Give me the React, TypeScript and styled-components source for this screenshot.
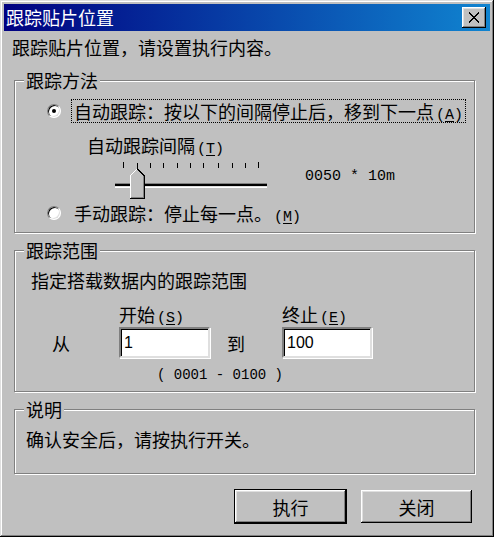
import React from 'react';
import styled, { createGlobalStyle } from 'styled-components';

const GlobalStyle = createGlobalStyle`
  html, body {
    margin: 0;
    padding: 0;
    background: #c0c0c0;
  }
  body {
    font-family: "Noto Sans CJK SC", "Liberation Sans", sans-serif;
  }
`;

const bevelOut = `inset -1px -1px #000, inset 1px 1px #fff, inset -2px -2px #808080, inset 2px 2px #dfdfdf`;

const Window = styled.div`
  box-sizing: border-box;
  width: 494px;
  height: 537px;
  padding: 4px;
  background: #c0c0c0;
  box-shadow: inset -1px -1px #000, inset 1px 1px #dfdfdf, inset -2px -2px #808080, inset 2px 2px #fff;
  display: flex;
  flex-direction: column;
  color: #000;
  font-size: 18px;
`;

const TitleBar = styled.div`
  height: 27px;
  flex-shrink: 0;
  display: flex;
  align-items: flex-start;
  padding: 0 4px 0 2px;
  background: linear-gradient(to right, #000080, #1084d0);
`;

const Title = styled.span`
  flex: 1;
  color: #fff;
  line-height: 27px;
`;

const CloseButton = styled.button`
  width: 24px;
  height: 21px;
  margin-top: 3px;
  padding: 0;
  border: none;
  background: #c0c0c0;
  box-shadow: ${bevelOut};
  display: flex;
  align-items: center;
  justify-content: center;
`;

const Body = styled.div`
  display: flex;
  flex-direction: column;
  padding: 0 15px 0 8px;
`;

const Intro = styled.div`
  margin-top: 5px;
  height: 22px;
  line-height: 22px;
`;

const Group = styled.fieldset<{ $gap: number; $pad: number }>`
  margin: ${p => p.$gap}px 0 0 2px;
  padding: 0 0 ${p => p.$pad}px 0;
  min-width: 0;
  border: 1px solid #808080;
  box-shadow: 1px 1px 0 #fff, inset 1px 1px 0 #fff;
`;

const Legend = styled.legend`
  margin-left: 9px;
  padding: 0 2px;
  height: 20px;
  line-height: 20px;
  background: #c0c0c0;
`;

const Key = styled.span`
  font-family: "Liberation Mono", monospace;
  font-size: 15px;
  line-height: 1;
  margin-left: 2px;
  & u {
    text-underline-offset: 2px;
  }
`;

const OptionRow = styled.div<{ $gap: number }>`
  display: flex;
  align-items: center;
  height: 24px;
  margin: ${p => p.$gap}px 0 0 32px;
`;

const Radio = styled.span<{ $checked?: boolean }>`
  box-sizing: border-box;
  position: relative;
  width: 14px;
  height: 14px;
  margin-top: -1px;
  border-radius: 50%;
  background: #fff;
  border: 1px solid;
  border-color: #808080 #fff #fff #808080;
  box-shadow: inset 1px 1px #000, inset -1px -1px #dfdfdf;
  &::after {
    content: "";
    display: ${p => (p.$checked ? 'block' : 'none')};
    position: absolute;
    left: 4px;
    top: 4px;
    width: 4px;
    height: 4px;
    border-radius: 50%;
    background: #000;
  }
`;

const OptionText = styled.span<{ $focus?: boolean }>`
  margin-left: 10px;
  padding: 0 2px;
  height: 22px;
  line-height: 22px;
  border: 1px dotted ${p => (p.$focus ? '#000' : 'transparent')};
`;

const IntervalLabel = styled.div`
  margin: 12px 0 0 72px;
  height: 20px;
  line-height: 20px;
`;

const SliderRow = styled.div`
  display: flex;
  align-items: flex-start;
  height: 40px;
  margin: 5px 0 0 97px;
`;

const SliderValue = styled.span`
  margin: 7px 0 0 33px;
  font-family: "Liberation Mono", monospace;
  font-size: 15px;
  line-height: 20px;
`;

const Description = styled.div`
  margin: 9px 0 0 16px;
  height: 22px;
  line-height: 22px;
`;

const RangeGrid = styled.div`
  display: grid;
  grid-template-columns: 67px 91px 72px 90px;
  grid-template-rows: 20px 31px;
  row-gap: 3px;
  margin: 13px 0 0 37px;
  line-height: 20px;
`;

const RangeWord = styled.span<{ $indent?: number }>`
  align-self: center;
  padding-left: ${p => p.$indent ?? 0}px;
`;

const TextInput = styled.input`
  box-sizing: border-box;
  width: 100%;
  height: 31px;
  margin: 0;
  padding: 0 0 0 3px;
  border: 2px solid;
  border-color: #808080 #dfdfdf #dfdfdf #808080;
  box-shadow: inset 1px 1px #000, 1px 1px 0 #fff;
  background: #fff;
  font-family: "Liberation Sans", sans-serif;
  font-size: 16px;
  color: #000;
  outline: none;
`;

const RangeHint = styled.div`
  margin: 7px 0 0 142px;
  height: 20px;
  font-family: "Liberation Mono", monospace;
  font-size: 14px;
  line-height: 20px;
  white-space: pre;
`;

const Note = styled.div`
  margin: 9px 0 0 11px;
  height: 22px;
  line-height: 22px;
`;

const ButtonRow = styled.div`
  display: flex;
  justify-content: flex-end;
  gap: 13px;
  margin: 15px 2px 0 0;
`;

const Button = styled.button<{ $default?: boolean }>`
  box-sizing: border-box;
  width: 113px;
  height: 35px;
  padding: 0;
  background: #c0c0c0;
  border: 1px solid ${p => (p.$default ? '#000' : 'transparent')};
  box-shadow: ${bevelOut};
  font-family: "Noto Sans CJK SC", sans-serif;
  font-size: 18px;
  color: #000;
`;

const Slider = () => {
  const ticks = [11, 25, 38, 51, 65, 78, 91, 106, 120, 133, 146];
  return (
    <svg width="160" height="40" viewBox="0 0 160 40" shapeRendering="crispEdges">
      {ticks.map((x, i) => (
        <rect
          key={x}
          x={x}
          y={i === 0 || i === ticks.length - 1 ? 2 : 3}
          width="1"
          height={i === 0 || i === ticks.length - 1 ? 6 : 5}
          fill="#000"
        />
      ))}
      <rect x="3" y="23" width="152" height="1" fill="#808080" />
      <rect x="3" y="24" width="152" height="2" fill="#000" />
      <rect x="3" y="26" width="152" height="1" fill="#dfdfdf" />
      <rect x="3" y="27" width="152" height="1" fill="#fff" />
      <polygon points="18,15 25,8 32,15 32,38 18,38" fill="#c0c0c0" />
      <polyline points="18.5,38 18.5,15.5 25,9" fill="none" stroke="#fff" strokeWidth="1" />
      <polyline points="25,8.5 32.5,16 32.5,38.5 18,38.5" fill="none" stroke="#000" strokeWidth="1" />
      <polyline points="31.5,16 31.5,37.5 19,37.5" fill="none" stroke="#808080" strokeWidth="1" />
    </svg>
  );
};

const App: React.FC = () => {
  return (
    <>
      <GlobalStyle />
      <Window>
        <TitleBar>
          <Title>跟踪贴片位置</Title>
          <CloseButton aria-label="关闭">
            <svg width="12" height="11" viewBox="0 0 12 11" shapeRendering="crispEdges">
              <path d="M1 0.5 L11 10.5 M11 0.5 L1 10.5" stroke="#000" strokeWidth="2" />
            </svg>
          </CloseButton>
        </TitleBar>

        <Body>
          <Intro>跟踪贴片位置，请设置执行内容。</Intro>

          <Group $gap={12} $pad={7}>
            <Legend>跟踪方法</Legend>
            <OptionRow $gap={9}>
              <Radio $checked />
              <OptionText $focus>
                自动跟踪：按以下的间隔停止后，移到下一点<Key>(<u>A</u>)</Key>
              </OptionText>
            </OptionRow>
            <IntervalLabel>
              自动跟踪间隔<Key>(<u>T</u>)</Key>
            </IntervalLabel>
            <SliderRow>
              <Slider />
              <SliderValue>0050 * 10m</SliderValue>
            </SliderRow>
            <OptionRow $gap={1}>
              <Radio />
              <OptionText>
                手动跟踪：停止每一点。<Key>(<u>M</u>)</Key>
              </OptionText>
            </OptionRow>
          </Group>

          <Group $gap={7} $pad={6}>
            <Legend>跟踪范围</Legend>
            <Description>指定搭载数据内的跟踪范围</Description>
            <RangeGrid>
              <span />
              <span>
                开始<Key>(<u>S</u>)</Key>
              </span>
              <span />
              <span>
                终止<Key>(<u>E</u>)</Key>
              </span>
              <RangeWord>从</RangeWord>
              <TextInput defaultValue="1" />
              <RangeWord $indent={17}>到</RangeWord>
              <TextInput defaultValue="100" />
            </RangeGrid>
            <RangeHint>( 0001 - 0100 )</RangeHint>
          </Group>

          <Group $gap={7} $pad={23}>
            <Legend>说明</Legend>
            <Note>确认安全后，请按执行开关。</Note>
          </Group>

          <ButtonRow>
            <Button $default>执行</Button>
            <Button>关闭</Button>
          </ButtonRow>
        </Body>
      </Window>
    </>
  );
};

export default App;
